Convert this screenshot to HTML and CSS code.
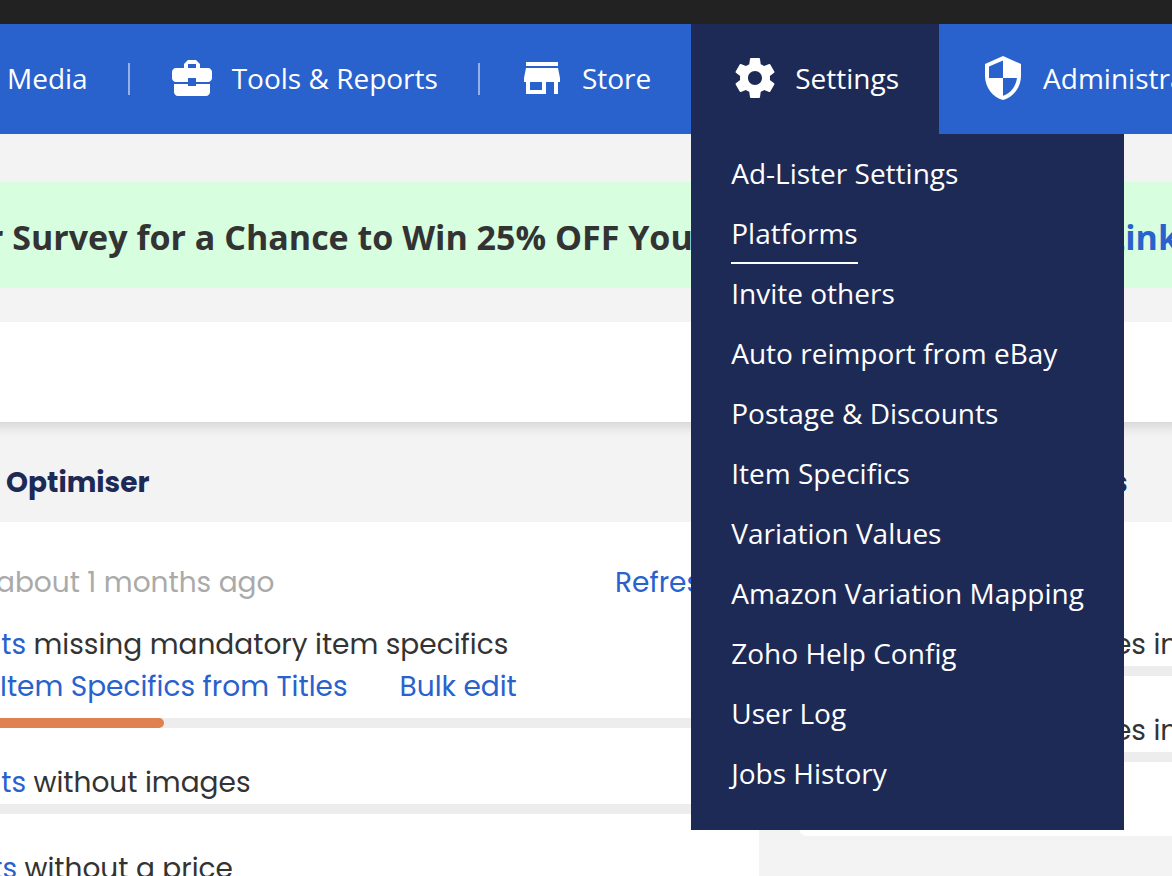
FILE: index.html
```html
<!DOCTYPE html>
<html lang="en">
<head>
  <meta charset="UTF-8">
  <meta name="viewport" content="width=device-width, initial-scale=1.0">
  <title>Ad-Lister</title>
  <link rel="stylesheet" href="styles.css">
</head>
<body>
  <div class="topbar"></div>

  <nav class="nav">
    <ul class="nav-list">
      <li class="nav-item first"><a href="#">Media</a></li>
      <li class="nav-item divided">
        <a href="#">
          <svg class="icon" viewBox="0 0 24 24"><path d="M10 16v-1H3.01L3 19c0 1.11.89 2 2 2h14c1.11 0 2-.89 2-2v-4h-7v1h-4zm10-9h-4.01V5l-2-2h-4l-2 2v2H4c-1.1 0-2 .9-2 2v3c0 1.11.89 2 2 2h6v-2h4v2h6c1.1 0 2-.9 2-2V9c0-1.1-.9-2-2-2zm-6 0h-4V5h4v2z"/></svg>
          Tools &amp; Reports
        </a>
      </li>
      <li class="nav-item divided">
        <a href="#">
          <svg class="icon" viewBox="0 0 24 24"><path d="M20 4H4v2h16V4zm1 10v-2l-1-5H4l-1 5v2h1v6h10v-6h4v6h2v-6h1zm-9 4H6v-4h6v4z"/></svg>
          Store
        </a>
      </li>
      <li class="nav-item open">
        <a href="#">
          <svg class="icon" viewBox="0 0 24 24"><path d="M19.43 12.98c.04-.32.07-.64.07-.98s-.03-.66-.07-.98l2.11-1.65c.19-.15.24-.42.12-.64l-2-3.46c-.12-.22-.39-.3-.61-.22l-2.49 1c-.52-.4-1.08-.73-1.69-.98l-.38-2.65C14.46 2.18 14.25 2 14 2h-4c-.25 0-.46.18-.49.42l-.38 2.65c-.61.25-1.17.59-1.69.98l-2.49-1c-.23-.09-.49 0-.61.22l-2 3.46c-.13.22-.07.49.12.64l2.11 1.65c-.04.32-.07.65-.07.98s.03.66.07.98l-2.11 1.65c-.19.15-.24.42-.12.64l2 3.46c.12.22.39.3.61.22l2.49-1c.52.4 1.08.73 1.69.98l.38 2.65c.03.24.24.42.49.42h4c.25 0 .46-.18.49-.42l.38-2.65c.61-.25 1.17-.59 1.69-.98l2.49 1c.23.09.49 0 .61-.22l2-3.46c.12-.22.07-.49-.12-.64l-2.11-1.65zM12 15.5c-1.93 0-3.5-1.57-3.5-3.5s1.57-3.5 3.5-3.5 3.5 1.57 3.5 3.5-1.57 3.5-3.5 3.5z"/></svg>
          Settings
        </a>
        <ul class="dropdown">
          <li><a href="#">Ad-Lister Settings</a></li>
          <li><a class="current" href="#">Platforms</a></li>
          <li><a href="#">Invite others</a></li>
          <li><a href="#">Auto reimport from eBay</a></li>
          <li><a href="#">Postage &amp; Discounts</a></li>
          <li><a href="#">Item Specifics</a></li>
          <li><a href="#">Variation Values</a></li>
          <li><a href="#">Amazon Variation Mapping</a></li>
          <li><a href="#">Zoho Help Config</a></li>
          <li><a href="#">User Log</a></li>
          <li><a href="#">Jobs History</a></li>
        </ul>
      </li>
      <li class="nav-item">
        <a href="#">
          <svg class="icon" viewBox="0 0 24 24"><path d="M12 1L3 5v6c0 5.55 3.84 10.74 9 12 5.16-1.26 9-6.45 9-12V5l-9-4zm0 10.99h7c-.53 4.12-3.28 7.79-7 8.94V12H5V6.3l7-3.11v8.8z"/></svg>
          Administration
        </a>
      </li>
    </ul>
  </nav>

  <div class="banner">
    <p>r Survey for a Chance to Win 25% OFF You</p>
    <a class="edge" href="#">Link</a>
  </div>

  <div class="strip"></div>

  <main class="panels">
    <section class="panel">
      <h2>Optimiser</h2>
      <div class="card">
        <div class="updated">
          <span>about 1 months ago</span>
          <a href="#">Refresh</a>
        </div>
        <div class="stat">
          <p><a class="count" href="#">ts</a> missing mandatory item specifics</p>
          <div class="actions">
            <a href="#">Item Specifics from Titles</a>
            <a href="#">Bulk edit</a>
          </div>
          <div class="bar"><div class="fill" style="width: 21.6%"></div></div>
        </div>
        <div class="stat">
          <p><a class="count" href="#">ts</a> without images</p>
          <div class="bar"></div>
        </div>
        <div class="stat">
          <p><a class="count short" href="#">ts</a> without a price</p>
          <div class="bar"></div>
        </div>
      </div>
    </section>

    <section class="panel side">
      <h2><span class="edge">s</span></h2>
      <div class="card">
        <div class="updated"></div>
        <div class="stat">
          <p><span class="edge">es in</span></p>
          <div class="bar"></div>
        </div>
        <div class="stat">
          <p><span class="edge">es in</span></p>
          <div class="bar"></div>
        </div>
      </div>
    </section>
  </main>
</body>
</html>
```
FILE: styles.css
```css
* {
  box-sizing: border-box;
}

body {
  margin: 0;
  background: #f3f3f3;
  color: #333;
  font: 28px/42px Poppins, Inter, sans-serif;
  overflow-x: hidden;
}

ul {
  list-style: none;
  margin: 0;
  padding: 0;
}

p, h2 {
  margin: 0;
  white-space: nowrap;
}

a {
  color: #2962cc;
  text-decoration: none;
}

.topbar {
  height: 24px;
  background: #222;
}

/* navigation */
.nav {
  background: #2962cc;
  font-family: "Open Sans", sans-serif;
}

.nav a {
  color: #fff;
  white-space: nowrap;
}

.nav-list {
  display: flex;
}

.nav-item {
  position: relative;
  flex-shrink: 0;
}

.nav-item > a {
  display: flex;
  align-items: center;
  gap: 16px;
  height: 110px;
  padding: 0 40px 2px;
}

.nav-item.first > a {
  padding-left: 7px;
}

.divided::before {
  content: '';
  position: absolute;
  left: 0;
  top: 39px;
  width: 2px;
  height: 32px;
  background: #94b1e6;
}

.nav-item.open {
  background: #1e2a56;
}

.icon {
  width: 48px;
  height: 48px;
  fill: #fff;
}

.dropdown {
  position: absolute;
  z-index: 10;
  top: 100%;
  left: 0;
  padding: 10px 40px 26px;
  background: #1e2a56;
}

.dropdown li {
  height: 60px;
}

.dropdown a {
  display: inline-block;
  height: 60px;
  line-height: 58px;
}

.dropdown .current {
  border-bottom: 2px solid #fff;
}

/* survey banner */
.banner {
  display: flex;
  justify-content: space-between;
  margin: 48px 0 34px;
  padding: 30px 0 26px;
  background: #d6fedf;
  font: bold 34px/50px "Open Sans", sans-serif;
}

.banner p {
  margin-left: -12px;
}

.edge {
  display: block;
  flex: none;
  width: 60px;
  margin-left: auto;
  white-space: nowrap;
}

.banner .edge {
  width: 66px;
}

.stat .edge {
  width: 58px;
}

/* shadow only below the strip */
.strip {
  position: relative;
  height: 100px;
  background: #fff;
  box-shadow: 0 -6px 12px 10px rgba(0, 0, 0, .14);
  clip-path: inset(0 0 -20px);
}

/* panels */
.panels {
  display: grid;
  grid-template-columns: 759fr 373fr;
  gap: 40px;
  align-items: start;
}

h2 {
  padding: 40px 6px 18px;
  font-size: 28px;
  line-height: 42px;
  color: #1e2a56;
}

.side h2 {
  padding-right: 0;
}

.card {
  padding: 40px 0;
  background: #fff;
}

.side .card {
  border-radius: 0 0 0 8px;
}

.updated {
  display: flex;
  justify-content: space-between;
  min-height: 42px;
  margin: 0 40px 20px -4px;
  color: #aaa;
}

.stat {
  margin-bottom: 34px;
}

.count {
  display: inline-flex;
  justify-content: flex-end;
  width: 26px;
}

.count.short {
  width: 17px;
}

.actions {
  display: flex;
  gap: 52px;
  margin-bottom: 10px;
}

.bar {
  height: 10px;
  background: #ededed;
}

.fill {
  height: 10px;
  border-radius: 0 5px 5px 0;
  background: #df8150;
}
```
